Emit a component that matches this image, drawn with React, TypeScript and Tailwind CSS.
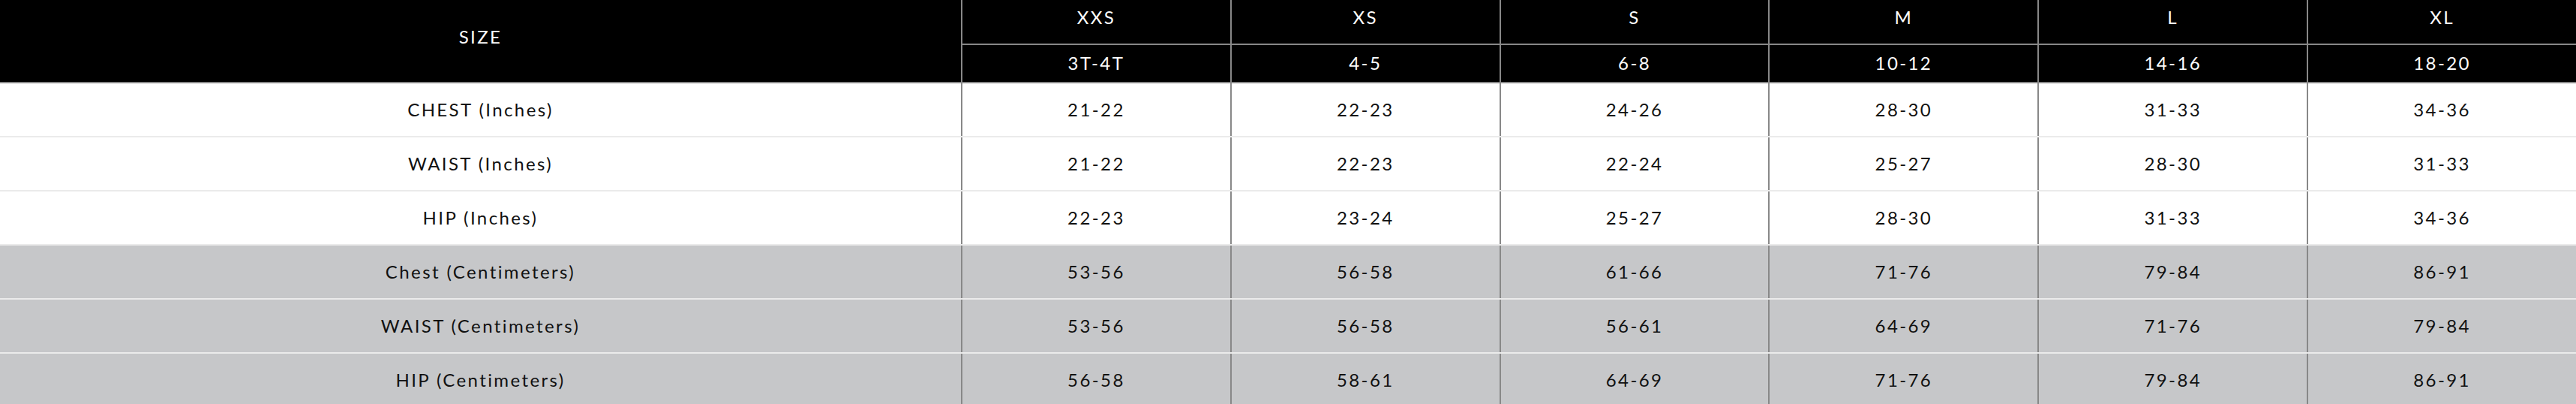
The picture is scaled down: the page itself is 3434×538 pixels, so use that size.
import React from "react";

const sizes = ["XXS", "XS", "S", "M", "L", "XL"];
const ages = ["3T-4T", "4-5", "6-8", "10-12", "14-16", "18-20"];

const rows: { label: string; values: string[]; gray: boolean }[] = [
  { label: "CHEST (Inches)", values: ["21-22", "22-23", "24-26", "28-30", "31-33", "34-36"], gray: false },
  { label: "WAIST (Inches)", values: ["21-22", "22-23", "22-24", "25-27", "28-30", "31-33"], gray: false },
  { label: "HIP (Inches)", values: ["22-23", "23-24", "25-27", "28-30", "31-33", "34-36"], gray: false },
  { label: "Chest (Centimeters)", values: ["53-56", "56-58", "61-66", "71-76", "79-84", "86-91"], gray: true },
  { label: "WAIST (Centimeters)", values: ["53-56", "56-58", "56-61", "64-69", "71-76", "79-84"], gray: true },
  { label: "HIP (Centimeters)", values: ["56-58", "58-61", "64-69", "71-76", "79-84", "86-91"], gray: true },
];

export default function App() {
  return (
    <div
      className="w-[3434px] bg-white text-[24px] tracking-[0.1em]"
      style={{ fontFamily: "Lato, 'Noto Sans', sans-serif" }}
    >
      {/* Header */}
      <div className="flex bg-black text-white border-b-2 border-[#888888]">
        <div className="w-[1281px] shrink-0 h-[109px] flex items-center justify-center pb-[12px]">
          SIZE
        </div>
        {sizes.map((s, i) => (
          <div key={s} className="flex-1 flex flex-col border-l-2 border-[#888888]">
            <div className="h-[60px] flex items-center justify-center pb-[12px] border-b-2 border-[#888888]">
              {s}
            </div>
            <div className="h-[47px] flex items-center justify-center">{ages[i]}</div>
          </div>
        ))}
      </div>
      {/* Body */}
      {rows.map((r) => (
        <div
          key={r.label}
          className={
            "flex h-[72px] border-b-2 border-[#ebebeb] text-[#111111] " +
            (r.gray ? "bg-[#c6c7c9]" : "bg-white")
          }
        >
          <div className="w-[1281px] shrink-0 flex items-center justify-center">{r.label}</div>
          {r.values.map((v, j) => (
            <div key={j} className="flex-1 flex items-center justify-center border-l-2 border-[#888888]">
              {v}
            </div>
          ))}
        </div>
      ))}
    </div>
  );
}
